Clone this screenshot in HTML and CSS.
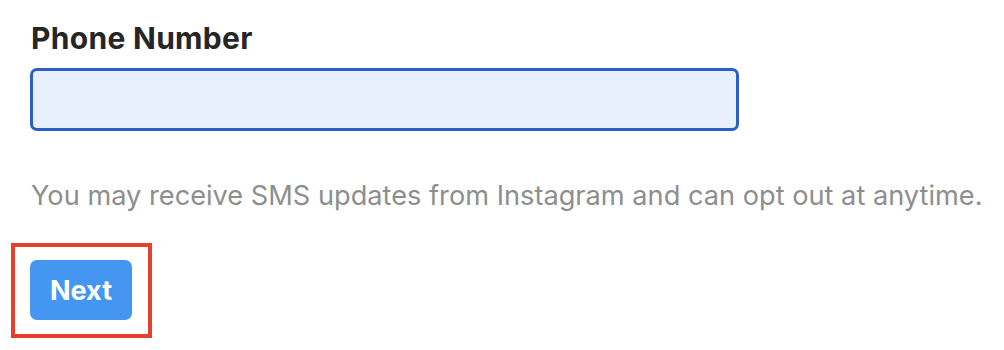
FILE: index.html
```html
<!DOCTYPE html>
<html>
<head>
<meta charset="utf-8">
<link rel="stylesheet" href="styles.css">
</head>
<body>
<div class="form">
  <label class="label" for="phone">Phone Number</label>
  <input class="input" id="phone" type="tel">
  <p class="note">You may receive SMS updates from Instagram and can opt out at anytime.</p>
  <div class="highlight">
    <button class="next" type="button">Next</button>
  </div>
</div>
</body>
</html>
```
FILE: styles.css
```css
html, body {
  margin: 0;
  padding: 0;
  background: #ffffff;
}
body {
  font-family: Inter, "Liberation Sans", Arial, sans-serif;
  width: 1004px;
  height: 350px;
  overflow: hidden;
}
.form {
  display: flex;
  flex-direction: column;
  align-items: flex-start;
  padding-left: 31px;
  padding-top: 20px;
}
.label {
  font-size: 30px;
  font-weight: 700;
  line-height: 36px;
  letter-spacing: 0.3px;
  color: #262626;
}
.input {
  box-sizing: border-box;
  margin: 12px 0 0 -1px;
  width: 709px;
  height: 63px;
  border: 3px solid #2b5fc5;
  border-radius: 7px;
  background: #e8f0fe;
  outline: none;
}
.note {
  margin: 49px 0 0 0;
  font-size: 27.2px;
  line-height: 32px;
  color: #8e8e8e;
  white-space: nowrap;
}
.highlight {
  box-sizing: border-box;
  margin: 31px 0 0 -20px;
  width: 141px;
  height: 95px;
  border: 4px solid #e4402a;
  padding: 13px 0 0 15px;
}
.next {
  width: 102px;
  height: 60px;
  border: none;
  border-radius: 7px;
  background: #4496f0;
  color: #ffffff;
  font-family: Inter, "Liberation Sans", Arial, sans-serif;
  font-size: 27px;
  font-weight: 700;
  padding: 0;
}
```
